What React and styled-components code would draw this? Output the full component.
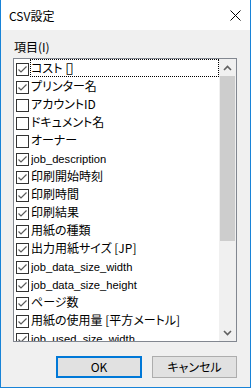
import React from "react";
import styled, { createGlobalStyle } from "styled-components";

const GlobalStyle = createGlobalStyle`
  html, body {
    margin: 0;
    padding: 0;
    background: #ffffff;
  }
  * { box-sizing: border-box; }
`;

const Window = styled.div`
  width: 251px;
  height: 388px;
  border: 1px solid #1883d7;
  border-top: none;
  background: #f0f0f0;
  display: flex;
  flex-direction: column;
  font-family: "Noto Sans CJK JP", "Noto Sans", sans-serif;
  font-feature-settings: "palt";
  font-size: 12px;
  color: #000;
  overflow: hidden;
`;

const TitleBar = styled.div`
  height: 30px;
  flex-shrink: 0;
  background: #ffffff;
  display: flex;
  align-items: center;
  justify-content: space-between;
  padding-left: 8px;
`;

const Title = styled.span`
  font-size: 12px;
  line-height: 16px;
  margin-top: 1px;
`;

const CloseButton = styled.div`
  width: 30px;
  height: 30px;
  display: flex;
  align-items: center;
  justify-content: center;
`;

const Body = styled.div`
  flex: 1;
  display: flex;
  flex-direction: column;
  padding: 9px 13px 9px 12px;
`;

const FieldLabel = styled.div`
  height: 16px;
  line-height: 16px;
  margin-bottom: 3px;
  padding-left: 1px;
`;

const ListBox = styled.div`
  height: 284px;
  flex-shrink: 0;
  border: 1px solid #828790;
  background: #ffffff;
  display: flex;
  overflow: hidden;
`;

const Items = styled.div`
  flex: 1;
  display: flex;
  flex-direction: column;
  overflow: hidden;
`;

const Row = styled.div`
  height: 18px;
  flex-shrink: 0;
  display: flex;
  align-items: center;
  padding-left: 2px;
`;

const Box = styled.div`
  width: 13px;
  height: 13px;
  flex-shrink: 0;
  border: 1px solid #333333;
  background: #ffffff;
  margin-top: 2px;
  margin-right: 1px;
  display: flex;
  align-items: center;
  justify-content: center;
`;

const ItemText = styled.div`
  flex: 1;
  height: 18px;
  line-height: 16px;
  border: 1px dotted ${(p) => (p.$focused ? "#000000" : "transparent")};
  white-space: nowrap;
  overflow: hidden;
  font-family: ${(p) =>
    p.$latin
      ? '"Liberation Sans", "Noto Sans", sans-serif'
      : '"Noto Sans CJK JP", "Noto Sans", sans-serif'};
  font-size: ${(p) => (p.$latin ? "11.2px" : "12px")};
  padding-top: ${(p) => (p.$latin ? "1px" : "0")};
`;

const Tofu = styled.span`
  font-family: "DejaVu Sans", sans-serif;
  font-size: 15px;
  line-height: 14px;
  margin-left: 3px;
`;

const ScrollBar = styled.div`
  width: 17px;
  flex-shrink: 0;
  background: #f0f0f0;
  display: flex;
  flex-direction: column;
`;

const ArrowButton = styled.div`
  height: 17px;
  flex-shrink: 0;
  display: flex;
  align-items: center;
  justify-content: center;
`;

const Track = styled.div`
  flex: 1;
  display: flex;
  flex-direction: column;
`;

const Thumb = styled.div`
  margin: 0 1px;
  background: #cdcdcd;
`;

const ButtonRow = styled.div`
  margin-top: 14px;
  display: flex;
  justify-content: flex-end;
  gap: 10px;
`;

const Button = styled.div`
  width: ${(p) => (p.$default ? "86px" : "85px")};
  height: 22px;
  background: #e1e1e1;
  border: ${(p) => (p.$default ? "2px solid #0078d7" : "1px solid #adadad")};
  display: flex;
  align-items: center;
  justify-content: center;
  font-size: 12px;
  line-height: 16px;
`;

const items = [
  { label: "コスト", tofu: true, checked: true, focused: true },
  { label: "プリンター名", checked: true },
  { label: "アカウントID", checked: false },
  { label: "ドキュメント名", checked: false },
  { label: "オーナー", checked: false },
  { label: "job_description", checked: true },
  { label: "印刷開始時刻", checked: true },
  { label: "印刷時間", checked: true },
  { label: "印刷結果", checked: true },
  { label: "用紙の種類", checked: true },
  { label: "出力用紙サイズ [JP]", checked: true },
  { label: "job_data_size_width", checked: true },
  { label: "job_data_size_height", checked: true },
  { label: "ページ数", checked: true },
  { label: "用紙の使用量 [平方メートル]", checked: true },
  { label: "job_used_size_width", checked: true },
];

const isLatin = (s) => /^[\x20-\x7e]+$/.test(s);

const CheckMark = () => (
  <svg width="11" height="11" viewBox="0 0 11 11">
    <path d="M1.5 5.5 L4 8 L9.5 2.5" fill="none" stroke="#5a5a5a" strokeWidth="1.2" />
  </svg>
);

const Chevron = ({ up }) => (
  <svg width="9" height="6" viewBox="0 0 9 6">
    <path
      d={up ? "M1 5 L4.5 1.5 L8 5" : "M1 1 L4.5 4.5 L8 1"}
      fill="none"
      stroke="#606060"
      strokeWidth="1.6"
    />
  </svg>
);

export default function App() {
  return (
    <>
      <GlobalStyle />
      <Window>
        <TitleBar>
          <Title>CSV設定</Title>
          <CloseButton>
            <svg width="11" height="11" viewBox="0 0 11 11">
              <path d="M0.5 0.5 L10.5 10.5 M10.5 0.5 L0.5 10.5" stroke="#000" strokeWidth="1" />
            </svg>
          </CloseButton>
        </TitleBar>
        <Body>
          <FieldLabel>項目(I)</FieldLabel>
          <ListBox>
            <Items>
              {items.map((it) => (
                <Row key={it.label}>
                  <Box>{it.checked && <CheckMark />}</Box>
                  <ItemText $focused={it.focused} $latin={isLatin(it.label)}>
                    {it.label}
                    {it.tofu && <Tofu>▯</Tofu>}
                  </ItemText>
                </Row>
              ))}
            </Items>
            <ScrollBar>
              <ArrowButton>
                <Chevron up />
              </ArrowButton>
              <Track>
                <Thumb style={{ height: "165px" }} />
              </Track>
              <ArrowButton>
                <Chevron />
              </ArrowButton>
            </ScrollBar>
          </ListBox>
          <ButtonRow>
            <Button $default>OK</Button>
            <Button>キャンセル</Button>
          </ButtonRow>
        </Body>
      </Window>
    </>
  );
}
